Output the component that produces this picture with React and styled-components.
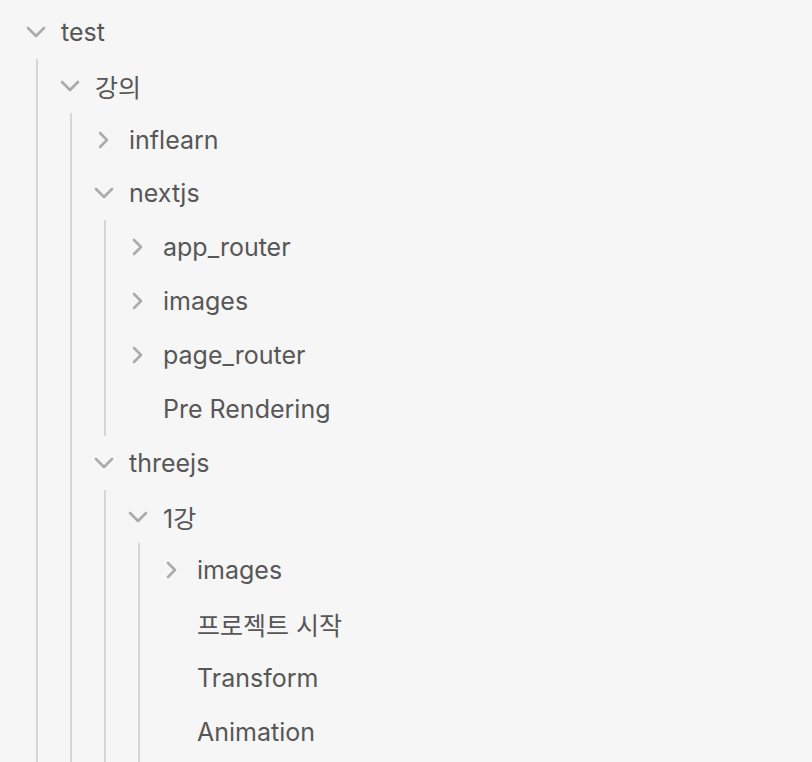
import React from 'react'
import styled, { createGlobalStyle } from 'styled-components'

const GlobalStyle = createGlobalStyle`
  html, body {
    margin: 0;
    padding: 0;
    background: #f6f6f6;
  }
  body {
    font-family: Inter, "Noto Sans CJK KR", sans-serif;
  }
`

const tree = [
  {
    name: 'test',
    open: true,
    children: [
      {
        name: '강의',
        open: true,
        children: [
          { name: 'inflearn', folder: true },
          {
            name: 'nextjs',
            open: true,
            children: [
              { name: 'app_router', folder: true },
              { name: 'images', folder: true },
              { name: 'page_router', folder: true },
              { name: 'Pre Rendering' },
            ],
          },
          {
            name: 'threejs',
            open: true,
            children: [
              {
                name: '1강',
                open: true,
                children: [
                  { name: 'images', folder: true },
                  { name: '프로젝트 시작' },
                  { name: 'Transform' },
                  { name: 'Animation' },
                ],
              },
            ],
          },
        ],
      },
    ],
  },
]

const Page = styled.div`
  width: 812px;
  height: 762px;
  overflow: hidden;
  padding: 5px 0 0 24px;
  box-sizing: border-box;
`

const Row = styled.div`
  display: flex;
  align-items: center;
  height: 53.85px;
  gap: 13px;
`

const ChevronSlot = styled.span`
  flex: 0 0 24px;
  height: 24px;
  display: flex;
  align-items: center;
  justify-content: center;
  color: #ababab;
`

const Label = styled.span`
  font-size: 25px;
  color: #575757;
  white-space: nowrap;
`

const Children = styled.div`
  margin-left: 12px;
  padding-left: 20px;
  border-left: 2px solid #d6d6d6;
  padding-bottom: ${({ $tail }) => ($tail ? '4px' : '0')};
`

const Chevron = ({ open }) =>
  open ? (
    <svg width="20" height="12" viewBox="0 0 20 12" fill="none">
      <path d="M2 2L10 10L18 2" stroke="currentColor" strokeWidth="2.6" strokeLinecap="round" strokeLinejoin="round" />
    </svg>
  ) : (
    <svg width="14" height="18" viewBox="0 0 14 18" fill="none">
      <path d="M3 2L10 9L3 16" stroke="currentColor" strokeWidth="2.6" strokeLinecap="round" strokeLinejoin="round" />
    </svg>
  )

const TreeItem = ({ node, tail }) => {
  const isFolder = node.folder || node.children
  return (
    <div>
      <Row>
        <ChevronSlot>{isFolder ? <Chevron open={node.open} /> : null}</ChevronSlot>
        <Label>{node.name}</Label>
      </Row>
      {node.open && node.children ? (
        <Children $tail={tail}>
          {node.children.map((child, i) => (
            <TreeItem key={i} node={child} tail={tail && i === node.children.length - 1} />
          ))}
        </Children>
      ) : null}
    </div>
  )
}

export default function App() {
  return (
    <>
      <GlobalStyle />
      <Page>
        {tree.map((node, i) => (
          <TreeItem key={i} node={node} tail />
        ))}
      </Page>
    </>
  )
}
